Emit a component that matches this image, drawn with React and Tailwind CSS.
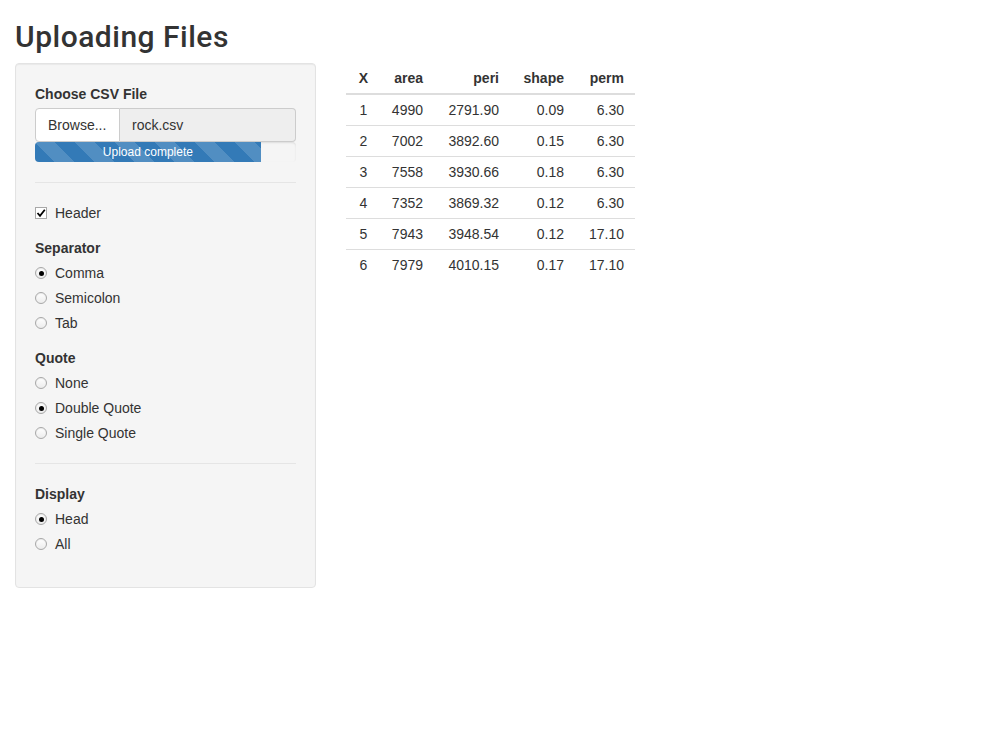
import React from 'react';

const rows = [
  ['1', '4990', '2791.90', '0.09', '6.30'],
  ['2', '7002', '3892.60', '0.15', '6.30'],
  ['3', '7558', '3930.66', '0.18', '6.30'],
  ['4', '7352', '3869.32', '0.12', '6.30'],
  ['5', '7943', '3948.54', '0.12', '17.10'],
  ['6', '7979', '4010.15', '0.17', '17.10'],
];

const cols = [
  { name: 'X', cls: 'w-[35px] text-center' },
  { name: 'area', cls: 'w-[50px] text-right pr-2' },
  { name: 'peri', cls: 'w-[76px] text-right pr-2' },
  { name: 'shape', cls: 'w-[65px] text-right pr-2' },
  { name: 'perm', cls: 'w-[63px] text-right pr-[11px]' },
];

function Radio({ label, checked }) {
  return (
    <div className="flex items-center h-5 mt-[5px]">
      <span className="w-3 h-3 rounded-full border border-[#a8a8a8] bg-gradient-to-b from-white to-[#ececec] flex items-center justify-center shadow-[inset_0_1px_1px_rgba(0,0,0,0.08)]">
        {checked && <span className="w-[5px] h-[5px] rounded-full bg-black" />}
      </span>
      <span className="ml-2">{label}</span>
    </div>
  );
}

function Label({ children, className = '' }) {
  return <div className={`font-bold h-5 ${className}`}>{children}</div>;
}

export default function App() {
  return (
    <div className="px-[15px] text-[14px] leading-5 text-[#333] font-['Liberation_Sans',Arial,sans-serif]">
      <h2 className="text-[30px] leading-[33px] font-medium tracking-[0.5px] font-['Roboto',Arial,sans-serif] mt-5 mb-[10px]">Uploading Files</h2>

      <div className="flex items-start">
        {/* Sidebar */}
        <div className="w-[301px] bg-[#f5f5f5] border border-[#e3e3e3] rounded shadow-[inset_0_1px_1px_rgba(0,0,0,0.05)] px-[19px] pt-5 pb-[33px] flex flex-col">
          <Label>Choose CSV File</Label>
          <div className="flex h-[34px] mt-1">
            <div className="w-[85px] bg-white border border-[#ccc] rounded-l flex items-center px-3">Browse...</div>
            <div className="flex-1 bg-[#eee] border border-l-0 border-[#ccc] rounded-r flex items-center px-3">rock.csv</div>
          </div>
          <div className="h-5 bg-[#f5f5f5] rounded shadow-[inset_0_1px_2px_rgba(0,0,0,0.1)] overflow-hidden">
            <div className="w-[86.5%] h-full bg-[#337ab7] bg-[linear-gradient(45deg,rgba(255,255,255,0.15)_25%,transparent_25%,transparent_50%,rgba(255,255,255,0.15)_50%,rgba(255,255,255,0.15)_75%,transparent_75%,transparent)] bg-[length:40px_40px] text-white text-[12px] leading-5 text-center">
              Upload complete
            </div>
          </div>

          <div className="mt-5 border-t border-[#e5e5e5]" />

          <div className="flex items-center h-5 mt-5">
            <span className="w-3 h-3 border border-[#a8a8a8] bg-white flex items-center justify-center">
              <svg width="10" height="10" viewBox="0 0 10 10">
                <path d="M1.5 5 L4 7.8 L8.8 1.8" fill="none" stroke="#000" strokeWidth="1.8" />
              </svg>
            </span>
            <span className="ml-2">Header</span>
          </div>

          <Label className="mt-[15px]">Separator</Label>
          <Radio label="Comma" checked />
          <Radio label="Semicolon" />
          <Radio label="Tab" />

          <Label className="mt-[15px]">Quote</Label>
          <Radio label="None" />
          <Radio label="Double Quote" checked />
          <Radio label="Single Quote" />

          <div className="mt-5 border-t border-[#e5e5e5]" />

          <Label className="mt-5">Display</Label>
          <Radio label="Head" checked />
          <Radio label="All" />
        </div>

        {/* Main */}
        <div className="ml-[30px]">
          <table className="border-collapse">
            <thead>
              <tr className="border-b-2 border-[#ddd]">
                {cols.map((c) => (
                  <th key={c.name} className={`font-bold py-[5px] ${c.cls}`}>{c.name}</th>
                ))}
              </tr>
            </thead>
            <tbody>
              {rows.map((r, i) => (
                <tr key={i} className={i > 0 ? 'border-t border-[#ddd]' : ''}>
                  {r.map((v, j) => (
                    <td key={j} className={`py-[5px] ${cols[j].cls}`}>{v}</td>
                  ))}
                </tr>
              ))}
            </tbody>
          </table>
        </div>
      </div>
    </div>
  );
}
